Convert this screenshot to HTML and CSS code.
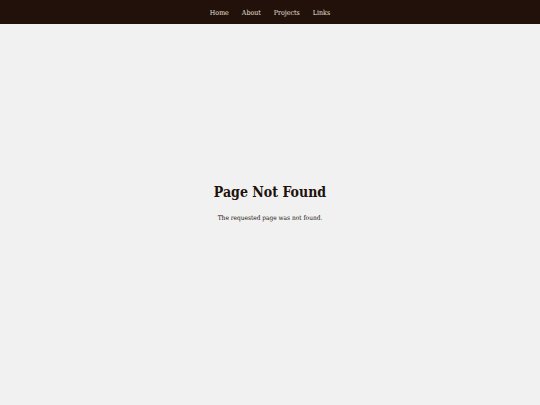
FILE: index.html
```html
<!DOCTYPE html>
<html lang="en">
<head>
<meta charset="utf-8">
<title>Page Not Found</title>
<link rel="stylesheet" href="styles.css">
</head>
<body>
<header class="topbar">
  <nav class="nav">
    <a href="#">Home</a>
    <a href="#">About</a>
    <a href="#">Projects</a>
    <a href="#">Links</a>
  </nav>
</header>
<main class="content">
  <h1 class="title">Page Not Found</h1>
  <p class="message">The requested page was not found.</p>
</main>
</body>
</html>
```
FILE: styles.css
```css
html, body {
  margin: 0;
  padding: 0;
}
body {
  background: #f1f1f1;
  font-family: "DejaVu Serif Condensed", "DejaVu Serif", Georgia, serif;
  color: #1e120c;
  height: 405px;
  display: flex;
  flex-direction: column;
}
.topbar {
  background: #22110a;
  height: 24px;
  display: flex;
  align-items: center;
  justify-content: center;
}
.nav {
  display: flex;
  gap: 13px;
  padding-top: 1px;
}
.nav a {
  color: #e8e0d8;
  text-decoration: none;
  font-size: 7px;
}
.content {
  flex: 1;
  display: flex;
  flex-direction: column;
  align-items: center;
  justify-content: center;
  padding-bottom: 24px;
}
.title {
  margin: 0;
  font-size: 14px;
  font-weight: bold;
}
.message {
  margin: 14px 0 0;
  font-size: 6.5px;
}
```
